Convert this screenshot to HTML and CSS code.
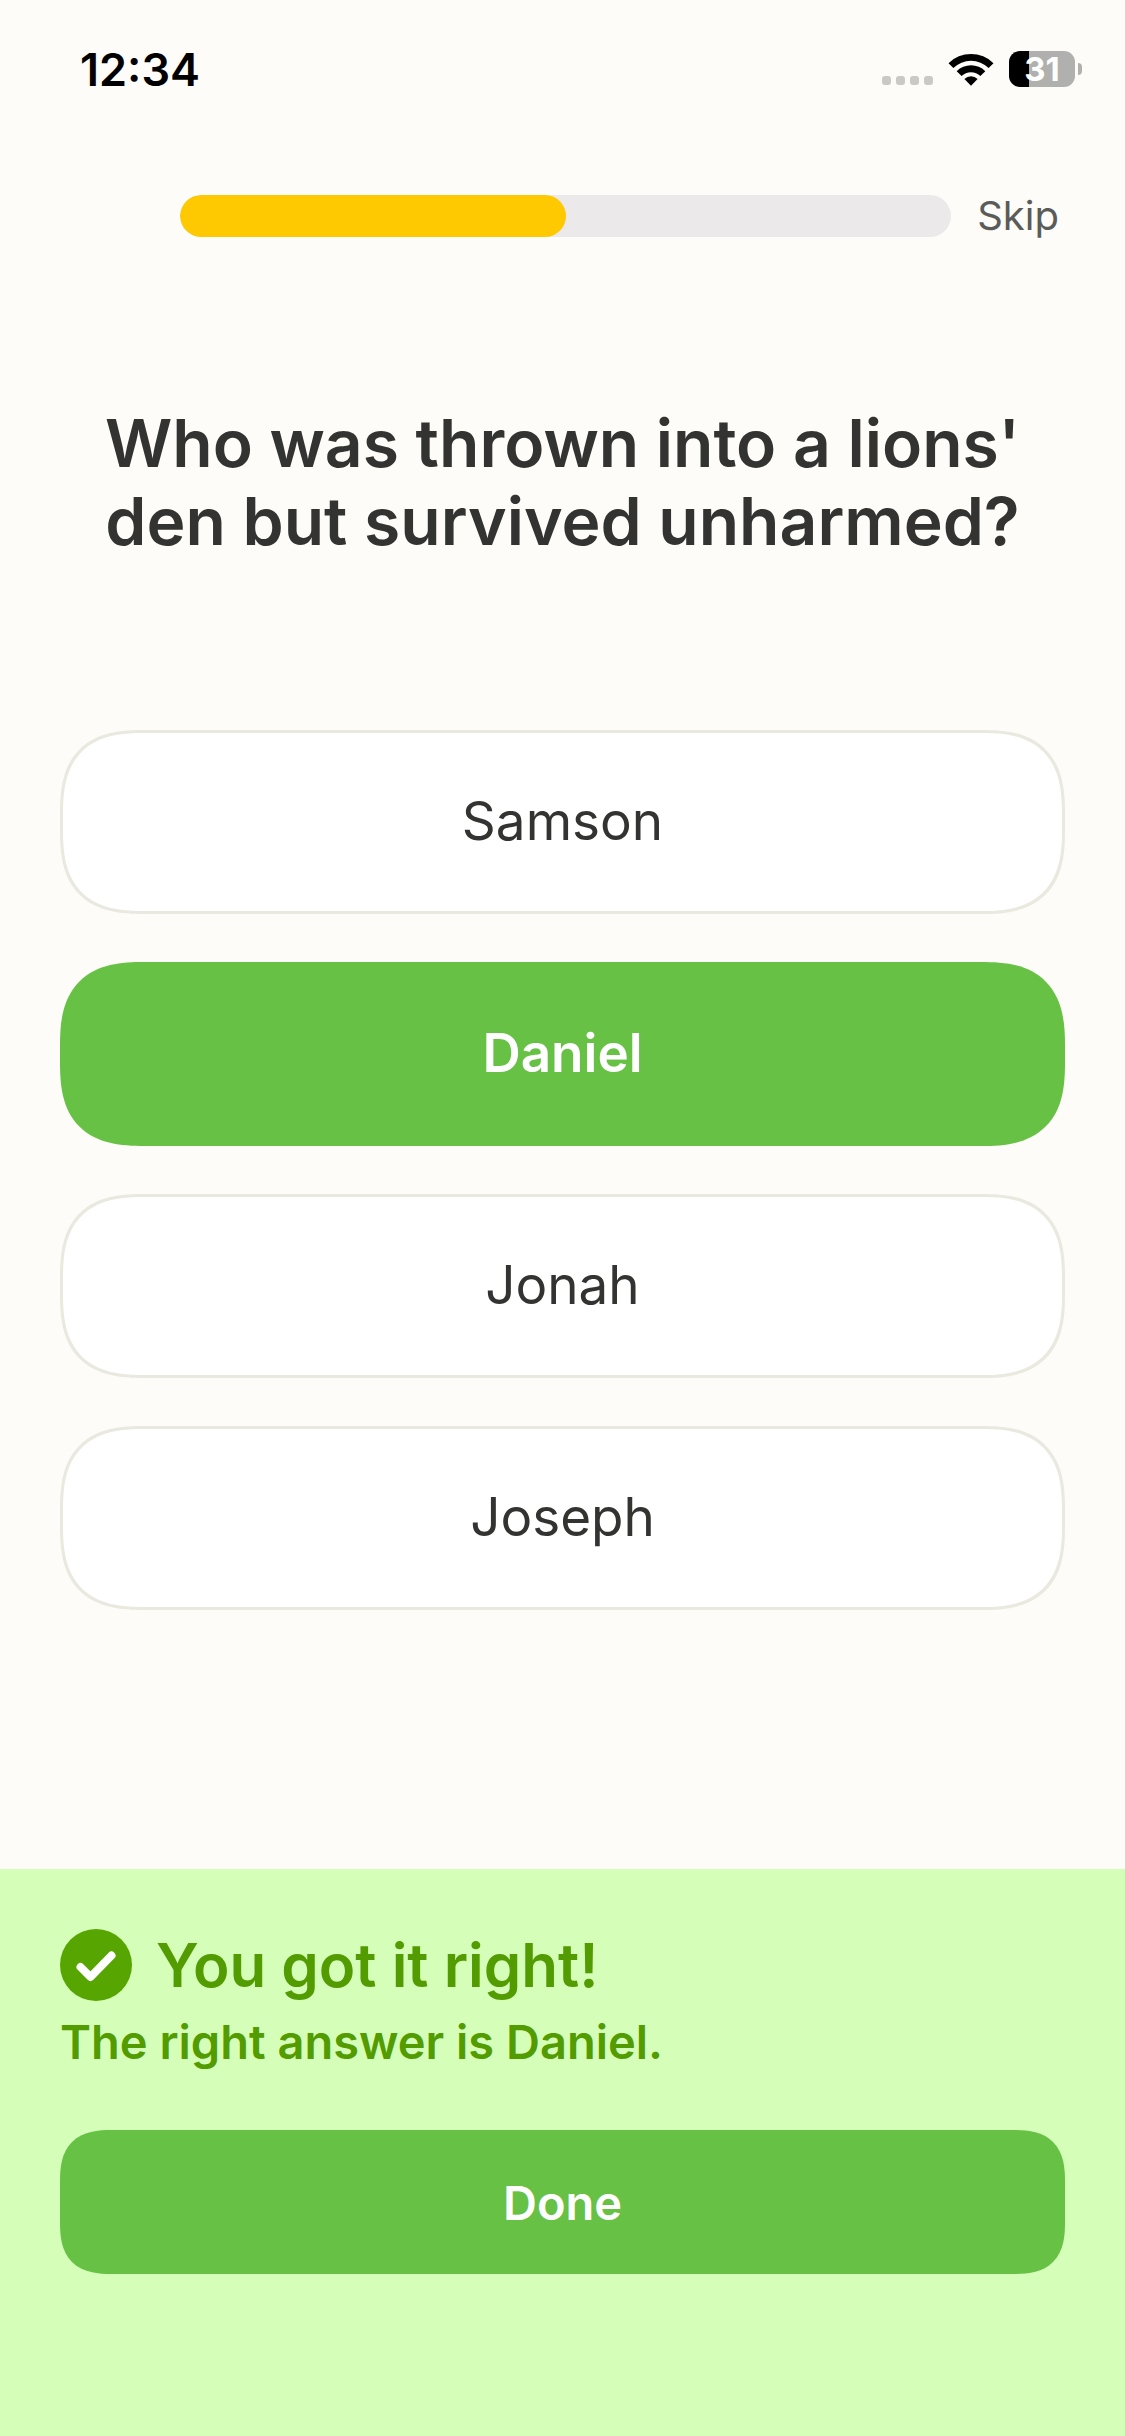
FILE: index.html
```html
<!DOCTYPE html>
<html lang="en">
<head>
    <meta charset="UTF-8">
    <meta name="viewport" content="width=device-width, initial-scale=1.0">
    <title>Bible Quiz</title>
    <link rel="stylesheet" href="styles.css">
</head>
<body>

    <div class="screen">
        <!-- Status bar -->
        <header class="status-bar">
            <time class="status-time">12:34</time>
            <div class="status-icons">
                <div class="signal">
                    <span></span><span></span><span></span><span></span>
                </div>
                <svg class="wifi" viewBox="0 0 46 33" aria-hidden="true">
                    <path d="M0.5 10.2 A32 32 0 0 1 45.5 10.2 L40.6 15.1 A25 25 0 0 0 5.4 15.1 Z"/>
                    <path d="M8.7 18.2 A20.3 20.3 0 0 1 37.3 18.2 L32.4 23.1 A13.4 13.4 0 0 0 13.6 23.1 Z"/>
                    <path d="M16.4 26 A9.4 9.4 0 0 1 29.6 26 L23 32.7 Z"/>
                </svg>
                <div class="battery">
                    <div class="battery-body">31</div>
                    <div class="battery-cap"></div>
                </div>
            </div>
        </header>

        <!-- Quiz progress -->
        <div class="quiz-header">
            <div class="progress">
                <div class="progress-fill" style="width: 50%"></div>
            </div>
            <button class="btn-skip" type="button">Skip</button>
        </div>

        <main class="quiz">
            <h1 class="question">Who was thrown into a lions' den but survived unharmed?</h1>

            <div class="answers">
                <button class="btn-answer" type="button">Samson</button>
                <button class="btn-answer correct" type="button">Daniel</button>
                <button class="btn-answer" type="button">Jonah</button>
                <button class="btn-answer" type="button">Joseph</button>
            </div>
        </main>

        <!-- Result panel -->
        <section class="result">
            <div class="result-title">
                <svg class="result-icon" viewBox="0 0 72 72" aria-hidden="true">
                    <circle cx="36" cy="36" r="36"/>
                    <path d="M20.5 38 L30.5 48 L51.5 26.5"/>
                </svg>
                <h2>You got it right!</h2>
            </div>
            <p class="result-text">The right answer is Daniel.</p>
            <button class="btn-done" type="button">Done</button>
        </section>
    </div>

</body>
</html>
```
FILE: styles.css
```css
:root {
    --page-bg: #fdfcf8;
    --text-color: #333331;
    --muted: #5b5b59;
    --progress: #fec900;
    --track: #ebe9e9;
    --answer-border: #e9e9df;
    --green: #66c144;
    --result-bg: #d5ffb9;
    --result-text: #529b00;
    --result-icon: #57a500;
}

* { box-sizing: border-box; margin: 0; padding: 0; }

body {
    background: var(--page-bg);
    color: var(--text-color);
    font-family: Inter, Roboto, sans-serif;
}

button {
    border: none;
    background: none;
    color: inherit;
    font-family: inherit;
    cursor: pointer;
}

.screen {
    display: flex;
    flex-direction: column;
    min-height: 100vh;
}

/* Status bar */
.status-bar {
    display: flex;
    justify-content: space-between;
    align-items: center;
    height: 138px;
    padding: 0 43px 0 80px;
    color: #000;
}

.status-time {
    font-size: 45px;
    font-weight: 600;
}

.status-icons {
    display: flex;
    align-items: center;
    gap: 15px;
}

.signal {
    display: flex;
    align-self: flex-end;
    gap: 5px;
    padding-bottom: 2px;
}

.signal span {
    width: 9px;
    height: 9px;
    border-radius: 3px;
    background: #c9c9c6;
}

.wifi {
    width: 46px;
    height: 33px;
}

.battery {
    display: flex;
    align-items: center;
    gap: 3px;
}

.battery-body {
    width: 66px;
    height: 36px;
    border-radius: 11px;
    background: linear-gradient(to right, #000 20px, #b0b0ae 20px);
    color: #fff;
    font-size: 33px;
    font-weight: 700;
    line-height: 36px;
    text-align: center;
}

.battery-cap {
    width: 4px;
    height: 12px;
    border-radius: 0 4px 4px 0;
    background: #b0b0ae;
}

/* Progress row */
.quiz-header {
    display: flex;
    align-items: center;
    gap: 26px;
    height: 156px;
    padding: 0 66px 0 180px;
}

.progress {
    flex: 1;
    height: 42px;
    border-radius: 21px;
    background: var(--track);
    overflow: hidden;
}

.progress-fill {
    height: 100%;
    border-radius: 21px;
    background: var(--progress);
}

.btn-skip {
    color: var(--muted);
    font-size: 40px;
    line-height: 48px;
}

/* Question and answers */
.quiz {
    padding: 110px 60px 0;
}

.question {
    padding: 0 40px;
    font-size: 66px;
    font-weight: 600;
    line-height: 78px;
    text-align: center;
}

.answers {
    display: flex;
    flex-direction: column;
    gap: 48px;
    margin-top: 170px;
}

.btn-answer {
    height: 184px;
    padding-bottom: 2px;
    border: 3px solid var(--answer-border);
    border-radius: 66px;
    background: #fff;
    font-size: 53px;
}

.btn-answer.correct {
    border-color: var(--green);
    background: var(--green);
    color: #fff;
    font-weight: 600;
}

/* Result panel */
.result {
    display: flex;
    flex-direction: column;
    margin-top: auto;
    padding: 60px 60px 162px;
    background: var(--result-bg);
    color: var(--result-text);
}

.result-title {
    display: flex;
    align-items: center;
    gap: 24px;
}

.result-title h2 {
    font-size: 60px;
    font-weight: 600;
    line-height: 72px;
}

.result-icon {
    width: 72px;
    height: 72px;
    fill: var(--result-icon);
}

.result-icon path {
    fill: none;
    stroke: #fff;
    stroke-width: 8;
    stroke-linecap: round;
    stroke-linejoin: round;
}

.result-text {
    margin-top: 12px;
    font-size: 47px;
    font-weight: 600;
    line-height: 57px;
}

.btn-done {
    height: 144px;
    margin-top: 60px;
    border-radius: 40px;
    background: var(--green);
    color: #fff;
    font-size: 47px;
    font-weight: 600;
}

/* Smoother continuous corners where the browser can draw them */
@supports (corner-shape: superellipse(1.4)) {
    .btn-answer {
        border-radius: 84px;
        corner-shape: superellipse(1.4);
    }

    .btn-done {
        border-radius: 52px;
        corner-shape: superellipse(1.4);
    }
}
```
